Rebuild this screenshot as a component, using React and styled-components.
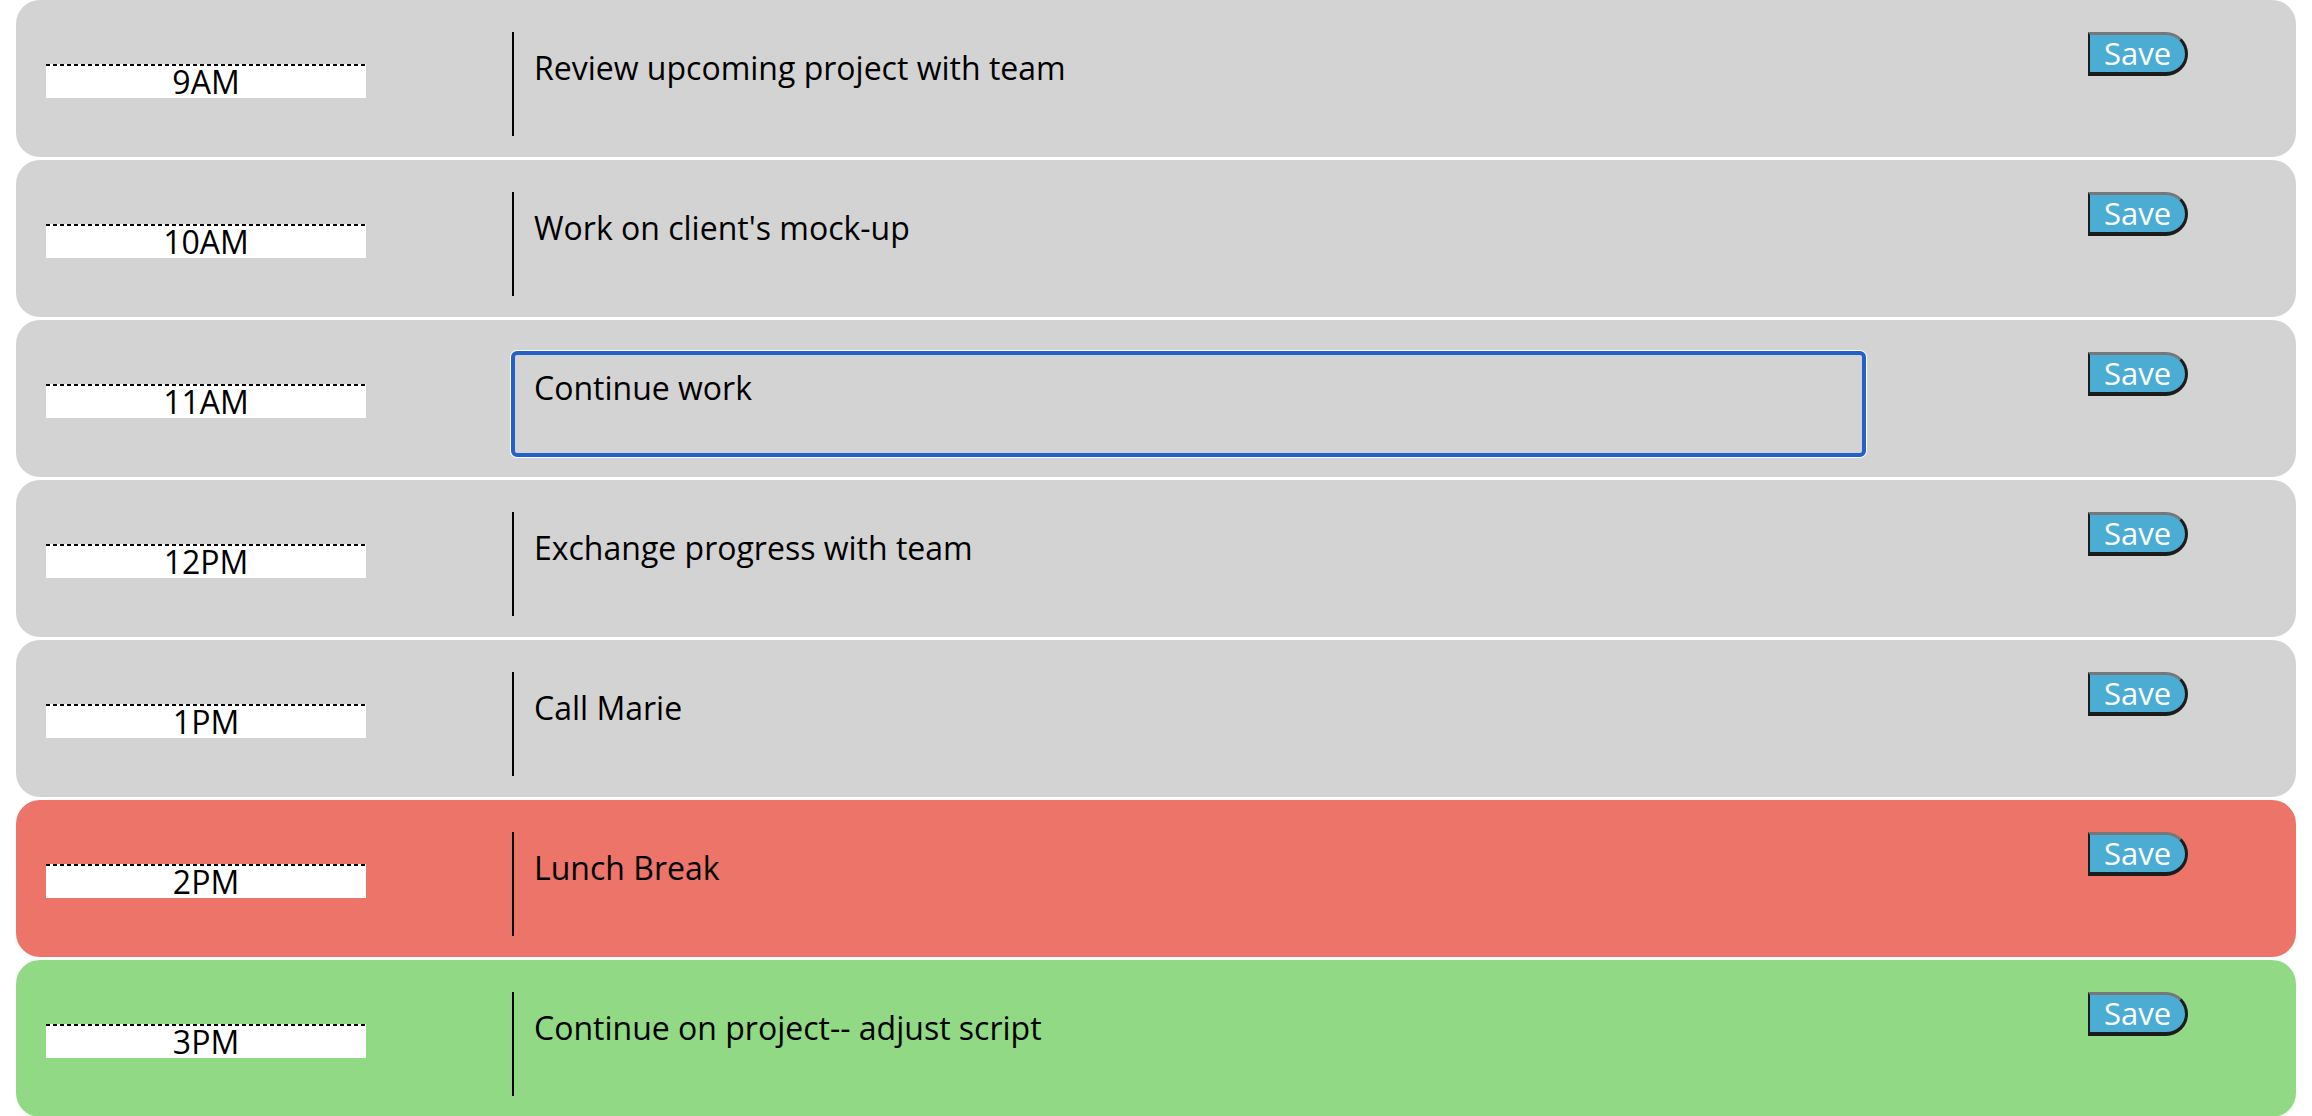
import styled, { createGlobalStyle, css } from 'styled-components';

const GlobalStyle = createGlobalStyle`
  body {
    margin: 0;
    background: #ffffff;
    font-family: "Open Sans", "Noto Sans", sans-serif;
  }
`;

const tones = {
  past: '#d3d3d3',
  present: '#ec7469',
  future: '#91d985',
};

const hours = [
  { hour: '9AM', text: 'Review upcoming project with team', tone: 'past' },
  { hour: '10AM', text: "Work on client's mock-up", tone: 'past' },
  { hour: '11AM', text: 'Continue work', tone: 'past', focused: true },
  { hour: '12PM', text: 'Exchange progress with team', tone: 'past' },
  { hour: '1PM', text: 'Call Marie', tone: 'past' },
  { hour: '2PM', text: 'Lunch Break', tone: 'present' },
  { hour: '3PM', text: 'Continue on project-- adjust script', tone: 'future' },
];

const App = () => {
  return (
    <>
      <GlobalStyle />
      <Schedule>
        {hours.map(({ hour, text, tone, focused }) => (
          <Row key={hour} $tone={tone}>
            <HourCell>
              <Hour>{hour}</Hour>
            </HourCell>
            <Description defaultValue={text} $focused={focused} />
            <SaveBtn type="button">Save</SaveBtn>
          </Row>
        ))}
      </Schedule>
    </>
  );
};

export default App;

const Schedule = styled.main`
  display: flex;
  flex-direction: column;
  gap: 3px;
  padding: 0 16px;
`;

const Row = styled.div`
  display: grid;
  grid-template-columns: 496px 1353px 1fr;
  height: 157px;
  border-radius: 24px;
  background: ${(p) => tones[p.$tone]};
`;

const HourCell = styled.div`
  padding: 64px 0 0 30px;
`;

// dashed top edge drawn as a strip so the dashes match the original
const Hour = styled.div`
  box-sizing: border-box;
  width: 320px;
  height: 34px;
  padding-top: 2px;
  background:
    repeating-linear-gradient(90deg, #000000 0 4px, transparent 4px 7px) top / 100% 2px no-repeat,
    #ffffff;
  color: #000000;
  font-size: 32px;
  line-height: 31px;
  text-align: center;
`;

const Description = styled.textarea`
  box-sizing: border-box;
  width: 100%;
  height: 104px;
  margin: 32px 0 0;
  padding: 14px 20px;
  border: none;
  border-left: 2px solid #000000;
  background: transparent;
  color: #000000;
  font-family: "Open Sans", "Noto Sans", sans-serif;
  font-size: 32px;
  resize: none;
  outline: none;

  ${(p) =>
    p.$focused &&
    css`
      border-radius: 5px;
      outline: 4px solid #2261c8;
      outline-offset: -3px;
      box-shadow: 0 0 0 2px #ffffff;
    `}
`;

const SaveBtn = styled.button`
  align-self: start;
  justify-self: start;
  box-sizing: border-box;
  width: 100px;
  height: 44px;
  margin: 32px 0 0 223px;
  padding: 0;
  background: #4badd4;
  color: #ffffff;
  font-family: "Open Sans", "Noto Sans", sans-serif;
  font-size: 31px;
  line-height: 1;
  border-style: solid;
  border-width: 3px 3px 4px 2px;
  border-color: #777777 #1c1c1c #1c1c1c #1c1c1c;
  border-radius: 0 22px 22px 0;
`;
